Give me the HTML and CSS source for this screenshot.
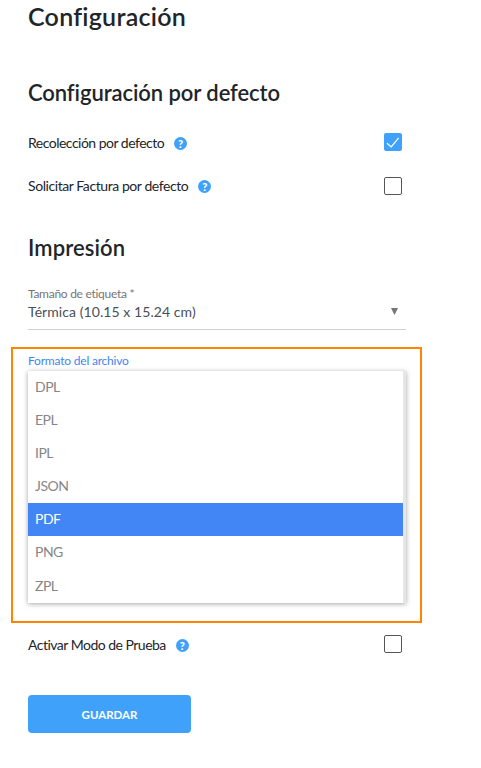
FILE: index.html
```html
<!DOCTYPE html>
<html lang="es">
<head>
    <meta charset="UTF-8">
    <meta name="viewport" content="width=device-width, initial-scale=1.0">
    <title>Configuración</title>
    <link rel="stylesheet" href="styles.css">
</head>
<body>
    <form class="container">
        <h1 class="title">Configuración</h1>

        <h2 class="subtitle">Configuración por defecto</h2>
        <div class="row first">
            <span class="row-label">Recolección por defecto</span>
            <span class="help">?</span>
            <span class="checkbox checked">
                <svg width="18" height="18" viewBox="0 0 18 18"><path d="M3 10.2L7.2 14L14.6 5" fill="none" stroke="#fff" stroke-width="1.2"/></svg>
            </span>
        </div>
        <div class="row invoice">
            <span class="row-label">Solicitar Factura por defecto</span>
            <span class="help">?</span>
            <span class="checkbox"></span>
        </div>

        <h2 class="subtitle print">Impresión</h2>
        <div class="select">
            <div class="select-label">Tamaño de etiqueta *</div>
            <div class="select-value">
                <span>Térmica (10.15 x 15.24 cm)</span>
                <svg class="arrow" width="7" height="7" viewBox="0 0 7 7"><path d="M0 0H7L3.5 7Z" fill="#757575"/></svg>
            </div>
        </div>

        <div class="highlight">
            <div class="format-label">Formato del archivo</div>
            <ul class="options">
                <li>DPL</li>
                <li>EPL</li>
                <li>IPL</li>
                <li>JSON</li>
                <li class="selected">PDF</li>
                <li>PNG</li>
                <li>ZPL</li>
            </ul>
        </div>

        <div class="row test">
            <span class="row-label">Activar Modo de Prueba</span>
            <span class="help">?</span>
            <span class="checkbox"></span>
        </div>
        <button class="save" type="button">GUARDAR</button>
    </form>
</body>
</html>
```
FILE: styles.css
```css
* {
    box-sizing: border-box;
}
body {
    font-family: 'Lato', sans-serif;
    background-color: #fff;
    color: #212529;
    margin: 0;
    padding: 0;
}
.container {
    width: 378px;
    margin-left: 28px;
}
.title {
    font-size: 25px;
    font-weight: 600;
    letter-spacing: 0.25px;
    line-height: 32px;
    margin: 0 0 47px;
}
.subtitle {
    font-size: 22px;
    font-weight: 600;
    letter-spacing: -0.08px;
    line-height: 28px;
    margin: 0 0 24px;
}
.row {
    display: flex;
    align-items: center;
    height: 22px;
    margin-bottom: 22px;
}
.row-label {
    font-size: 14px;
    letter-spacing: -0.51px;
}
.invoice .row-label {
    margin-bottom: 2px;
    letter-spacing: -0.42px;
}
.first .help,
.test .help {
    margin-top: 2px;
}
.help {
    width: 13px;
    height: 13px;
    margin-left: 10px;
    border-radius: 50%;
    background-color: #3fa1f9;
    color: #fff;
    font-size: 11px;
    font-weight: 900;
    line-height: 13px;
    text-align: center;
}
.checkbox {
    width: 18px;
    height: 18px;
    margin-left: auto;
    margin-right: 4px;
    border: 1px solid #55565a;
    border-radius: 2px;
}
.checkbox.checked {
    border: none;
    background-color: #3fa1f9;
}
.checkbox svg {
    display: block;
}
.print {
    margin-top: 37px;
    margin-bottom: 25px;
    letter-spacing: 0.1px;
}
.select {
    height: 43px;
    border-bottom: 1px solid #ced0d4;
}
.select-label {
    font-size: 12px;
    letter-spacing: -0.28px;
    line-height: 14px;
    color: #757575;
}
.select-value {
    display: flex;
    justify-content: space-between;
    align-items: center;
    height: 20px;
    padding-right: 8px;
    font-size: 14px;
    letter-spacing: 0.07px;
    color: #495057;
}
.highlight {
    width: 411px;
    height: 276px;
    margin: 17px 0 10px -17px;
    padding: 4px 15px;
    border: 2px solid #ff8500;
}
.format-label {
    font-size: 12px;
    letter-spacing: -0.2px;
    line-height: 15px;
    color: #4285f4;
}
.options {
    width: 378px;
    margin: 3px 0 0;
    padding: 0;
    list-style: none;
    border-right: 3px solid #e6e6e6;
    box-shadow: 0 1px 5px rgba(0, 0, 0, 0.35);
}
.options li {
    height: 33.1px;
    padding-left: 7px;
    font-size: 14px;
    letter-spacing: -0.5px;
    line-height: 31px;
    color: #868686;
}
.options .selected {
    background-color: #4285f4;
    color: #fff;
}
.save {
    display: block;
    width: 163px;
    height: 38px;
    margin-top: 40px;
    border: none;
    border-radius: 4px;
    background-color: #3fa1f9;
    color: #fff;
    font-family: inherit;
    font-size: 11.5px;
    font-weight: 700;
}
```
